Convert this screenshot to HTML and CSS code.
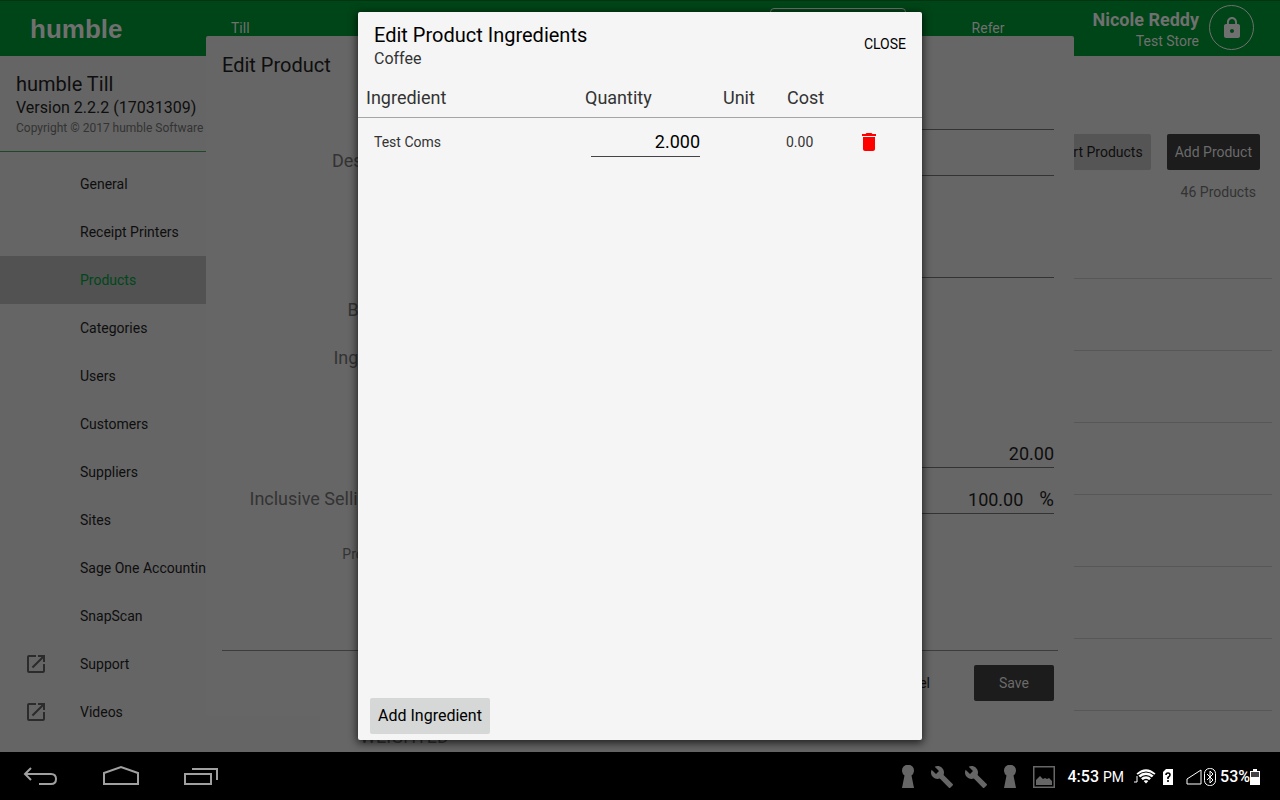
FILE: index.html
```html
<!DOCTYPE html>
<html lang="en">
<head>
<meta charset="utf-8">
<meta name="viewport" content="width=device-width, initial-scale=1">
<title>humble Till</title>
<link rel="stylesheet" href="styles.css">
</head>
<body>
<div class="app">
  <header class="topbar">
    <div class="brand">humble</div>
    <nav class="tabs">
      <a href="#till">Till</a>
      <a class="tab-active" href="#office" aria-label="Back office"></a>
      <a href="#refer">Refer</a>
    </nav>
    <div class="account">
      <strong>Nicole Reddy</strong>
      <span>Test Store</span>
    </div>
    <button class="lock" type="button" aria-label="Lock">
      <svg width="24" height="24" viewBox="0 0 24 24" fill="currentColor"><path d="M18 8h-1V6c0-2.800-2.200-5-5-5S7 3.200 7 6v2H6c-1.100 0-2 .9-2 2v10c0 1.100.9 2 2 2h12c1.100 0 2-.9 2-2V10c0-1.100-.9-2-2-2zm-6 9c-1.100 0-2-.9-2-2s.9-2 2-2 2 .9 2 2-.9 2-2 2zm3.100-9H8.900V6c0-1.700 1.400-3.100 3.100-3.100s3.100 1.400 3.100 3.100v2z"/></svg>
    </button>
  </header>
  <div class="workspace">
    <aside class="sidebar">
      <div class="about">
        <h1>humble Till</h1>
        <p class="version">Version 2.2.2 (17031309)</p>
        <p class="copyright">Copyright © 2017 humble Software</p>
      </div>
      <nav class="menu">
        <a href="#general">General</a>
        <a href="#printers">Receipt Printers</a>
        <a class="selected" href="#products">Products</a>
        <a href="#categories">Categories</a>
        <a href="#users">Users</a>
        <a href="#customers">Customers</a>
        <a href="#suppliers">Suppliers</a>
        <a href="#sites">Sites</a>
        <a href="#sage">Sage One Accounting</a>
        <a href="#snapscan">SnapScan</a>
        <a href="#support"><svg width="24" height="24" viewBox="0 0 24 24" fill="currentColor"><path d="M19 19H5V5h7V3H5c-1.110 0-2 .9-2 2v14c0 1.100.89 2 2 2h14c1.100 0 2-.9 2-2v-7h-2v7zM14 3v2h3.590l-9.830 9.830 1.410 1.410L19 6.410V10h2V3h-7z"/></svg>Support</a>
        <a href="#videos"><svg width="24" height="24" viewBox="0 0 24 24" fill="currentColor"><path d="M19 19H5V5h7V3H5c-1.110 0-2 .9-2 2v14c0 1.100.89 2 2 2h14c1.100 0 2-.9 2-2v-7h-2v7zM14 3v2h3.590l-9.830 9.830 1.410 1.410L19 6.410V10h2V3h-7z"/></svg>Videos</a>
      </nav>
    </aside>
    <main class="products">
      <div class="actions">
        <button class="btn" type="button">Import Products</button>
        <button class="btn dark" type="button">Add Product</button>
      </div>
      <p class="count">46 Products</p>
      <ul class="list">
        <li></li><li></li><li></li><li></li><li></li><li></li><li></li>
        <li class="last">WEIGHTED</li>
      </ul>
    </main>
  </div>

  <div class="layer">
    <section class="product-dialog" aria-label="Edit Product">
      <h2>Edit Product</h2>
      <form class="form">
        <div class="field name"><input id="name" aria-label="Name"></div>
        <div class="field"><label for="desc">Description</label><input id="desc"></div>
        <div class="field category"><input id="cat" aria-label="Category"></div>
        <div class="field plain barcode"><label for="bar">Barcodes</label><input id="bar"></div>
        <div class="field plain ingr"><label for="ingr">Ingredients</label><input id="ingr"></div>
        <div class="field cost"><input id="cost" aria-label="Cost Price" value="20.00"></div>
        <div class="field"><label for="sell">Inclusive Selling Price</label><span class="percent"><input id="sell" value="100.00"><span>%</span></span></div>
        <div class="field plain profit"><label for="profit">Profit Margin</label><input id="profit"></div>
      </form>
      <footer class="form-foot">
        <button class="btn flat" type="button">Cancel</button>
        <button class="btn dark save" type="button">Save</button>
      </footer>
    </section>
  </div>

  <div class="layer">
    <section class="ingredients" role="dialog" aria-labelledby="title">
      <header class="dialog-head">
        <div class="heading">
          <h2 id="title">Edit Product Ingredients</h2>
          <p>Coffee</p>
        </div>
        <button class="close" type="button">CLOSE</button>
      </header>
      <table>
        <colgroup><col class="c-name"><col class="c-qty"><col class="c-unit"><col class="c-cost"><col></colgroup>
        <thead><tr><th>Ingredient</th><th>Quantity</th><th>Unit</th><th>Cost</th><th></th></tr></thead>
        <tbody><tr>
          <td class="item">Test Coms</td>
          <td><input class="qty" aria-label="Quantity" value="2.000"></td>
          <td></td>
          <td>0.00</td>
          <td class="remove"><button class="trash" type="button" aria-label="Delete"><svg width="24" height="24" viewBox="0 0 24 24" fill="currentColor"><path d="M6 19c0 1.100.9 2 2 2h8c1.100 0 2-.9 2-2V7H6v12zM19 4h-3.500l-1-1h-5l-1 1H5v2h14V4z"/></svg></button></td>
        </tr></tbody>
      </table>
      <button class="add" type="button">Add Ingredient</button>
    </section>
  </div>
</div>

<footer class="system">
  <div class="keys">
    <button type="button" aria-label="Back"><svg width="36" height="24" viewBox="0 0 36 24" fill="none" stroke="currentColor" stroke-width="2"><path d="M8 3L2 9l6 6M2 9h26q5 0 5 5t-5 5H16"/></svg></button>
    <button type="button" aria-label="Home"><svg width="38" height="24" viewBox="0 0 38 24" fill="none" stroke="currentColor" stroke-width="2"><path d="M2 19V8l17-6 17 6v11z"/></svg></button>
    <button type="button" aria-label="Recent apps"><svg width="36" height="24" viewBox="0 0 36 24" fill="none" stroke="currentColor" stroke-width="2"><path d="M2 9h26v10H2zM9 4h25v11"/></svg></button>
  </div>
  <div class="notices">
    <svg width="24" height="24" viewBox="-5 0 24 24" fill="currentColor"><path d="M3.500 10.500a6 6 0 1 1 7 0L13 23H1z"/></svg>
    <svg width="24" height="24" viewBox="0 0 24 24" fill="currentColor"><path d="M22.700 19l-9.100-9.100c.9-2.300.4-5-1.500-6.900-2-2-5-2.400-7.400-1.300L9 6 6 9 1.600 4.700C.4 7.100.9 10.100 2.900 12.100c1.900 1.900 4.600 2.400 6.900 1.500l9.100 9.100c.4.4 1 .4 1.400 0l2.300-2.300c.5-.4.500-1.100.1-1.400z"/></svg>
    <svg width="24" height="24" viewBox="0 0 24 24" fill="currentColor"><path d="M22.700 19l-9.100-9.100c.9-2.300.4-5-1.500-6.900-2-2-5-2.400-7.400-1.300L9 6 6 9 1.600 4.700C.4 7.100.9 10.100 2.900 12.100c1.900 1.900 4.600 2.400 6.900 1.500l9.100 9.100c.4.4 1 .4 1.400 0l2.300-2.300c.5-.4.500-1.100.1-1.400z"/></svg>
    <svg width="24" height="24" viewBox="-5 0 24 24" fill="currentColor"><path d="M3.500 10.500a6 6 0 1 1 7 0L13 23H1z"/></svg>
    <svg width="24" height="24" viewBox="0 0 24 24" fill="currentColor"><path fill-rule="evenodd" d="M1 1h22v22H1zm1.500 1.500v19h19v-19z"/><path d="M4 20v-5l4-4 3 3 2-1 2 1 2-1 3 3v4z"/></svg>
  </div>
  <div class="status">
    <span class="clock">4:53 <small>PM</small></span>
    <svg class="wifi" width="22" height="18" viewBox="0 0 22 18"><path d="M12 15.500L2.500 5.500Q12-3 21.500 5.500z" fill="#fff"/><path d="M3.500 7.500q8.500-7 17 0M6 10.200q6-5 12 0M8.700 13q3.300-3 6.600 0" fill="none" stroke="#000" stroke-width="1.200"/><path d="M0 14h3V8" fill="none" stroke="#fff" stroke-width="1"/></svg>
    <svg class="sim" width="10" height="16" viewBox="0 0 10 16"><path d="M3 0h7v16H0V3z" fill="#fff"/><path d="M3 6q0-2 2-2t2 2q0 1.200-2 2.500v1.500M5 11v2" fill="none" stroke="#000" stroke-width="1.600"/></svg>
    <svg class="signal" width="16" height="16" viewBox="0 0 16 16"><path d="M1 10L15 1v14H1z" fill="none" stroke="#fff"/></svg>
    <svg class="bt" width="12" height="18" viewBox="0 0 12 18" fill="none" stroke="#fff"><rect x=".5" y=".5" width="11" height="17" rx="5"/><path d="M3 6l6 6-3 3V3l3 3-6 6"/></svg>
    <span class="level">53%</span>
    <svg width="10" height="16" viewBox="0 0 10 16"><path d="M3 0h4v2h3v14H0V2h3z" fill="#fff"/><path d="M1 3h8v5H1z" fill="#444"/></svg>
  </div>
</footer>
</body>
</html>
```

FILE: styles.css
```css
* { box-sizing: border-box; }
body { margin: 0; height: 100vh; display: flex; flex-direction: column; overflow: hidden; background: #000; color: #0e0e0e; font: 14px/20px Roboto, "Liberation Sans", sans-serif; }
h1, h2, p, ul { margin: 0; padding: 0; font-weight: 400; }
a { color: inherit; text-decoration: none; }
button { font: inherit; color: inherit; border: 0; padding: 0; background: none; }
input { font: inherit; color: inherit; border: 0; padding: 0; background: none; min-width: 0; border-radius: 0; text-align: right; outline: 0; }
svg { display: block; flex: none; }

.app { position: relative; flex: 1; min-height: 0; display: flex; flex-direction: column; overflow: hidden; background: #666; }
.topbar { height: 56px; flex: none; display: flex; align-items: center; padding: 0 26px 2px 30px; background: #004517; border-top: 1px solid #003310; color: #707070; }
.brand { width: 201px; padding-top: 2px; font: 700 26px/32px "Liberation Sans", sans-serif; }
.tabs { flex: 1; display: flex; align-items: center; }
.tab-active { width: 136px; height: 40px; margin-left: 520px; margin-right: 66px; border: 1px solid #707070; border-radius: 4px; }
.account { display: flex; flex-direction: column; align-items: flex-end; margin-right: 10px; padding-top: 4px; white-space: nowrap; }
.account strong { font-size: 18px; line-height: 22px; }
.lock { width: 45px; height: 45px; display: grid; place-items: center; border: 1px solid #707070; border-radius: 50%; }

.workspace { flex: 1; min-height: 0; display: flex; }
.sidebar { width: 320px; flex: none; background: #656565; }
.about { height: 96px; padding: 16px 16px 0; border-bottom: 1px solid #1d4a26; }
.about h1 { font-size: 20px; line-height: 24px; }
.version { font-size: 16px; line-height: 24px; }
.copyright { font-size: 12px; line-height: 16px; color: #333; }
.menu { padding-top: 8px; }
.menu a { height: 48px; display: flex; align-items: center; padding-left: 80px; }
.menu .selected { background: #525252; color: #00471a; }
.menu svg { margin: 0 32px 0 -56px; color: #2b2b2b; }

.products { flex: 1; min-width: 0; padding: 78px 8px 0 40px; }
.actions { display: flex; justify-content: flex-end; gap: 16px; padding-right: 12px; }
.btn { height: 36px; padding: 0 8px; border-radius: 2px; background: #555; }
.dark { background: #1c1c1c; color: #6b6b6b; }
.count { padding: 12px 16px 0 0; text-align: right; color: #333; }
.list { list-style: none; padding-top: 5px; }
.list li { height: 72px; border-bottom: 1px solid #575757; }
.list .last { border: 0; font-size: 18px; padding-top: 16px; color: #333; }

.layer { position: absolute; inset: 0; display: flex; align-items: center; justify-content: center; }
.product-dialog { width: 868px; max-width: 100%; height: calc(100% - 72px); display: flex; flex-direction: column; padding: 16px 16px 15px; background: #666; border-radius: 2px; }
.product-dialog h2 { font-size: 20px; line-height: 26px; }
.form { flex: 1; padding-right: 4px; font-size: 18px; }
.field { display: grid; grid-template-columns: 201px 1fr; gap: 16px; align-items: center; height: 46px; }
.field label { padding-top: 6px; text-align: right; color: #333; }
.field input { grid-column: 2; height: 36px; width: 100%; padding-top: 8px; border-bottom: 1px solid #333; }
.field.plain input, .percent input { border: 0; }
.name { margin-top: 11px; }
.category { margin-top: 56px; }
.barcode { margin-top: 1px; }
.ingr { margin-top: 2px; }
.cost { margin-top: 49px; }
.profit { margin-top: 9px; font-size: 14px; }
.percent { display: flex; align-items: center; gap: 16px; height: 36px; border-bottom: 1px solid #333; }
.percent span { padding-top: 6px; font-size: 20px; color: #0e0e0e; }
.form-foot { display: flex; justify-content: flex-end; gap: 36px; padding: 14px 4px 0 0; border-top: 1px solid #3c3c3c; }
.flat { background: none; }
.save { width: 80px; }

.ingredients { width: 564px; max-width: 100%; height: calc(100% - 24px); display: flex; flex-direction: column; background: #f5f5f5; color: #000; border-radius: 2px; box-shadow: 0 2px 8px 1px rgba(0, 0, 0, .7); }
.dialog-head { display: flex; align-items: center; justify-content: space-between; height: 64px; padding: 0 16px; }
.heading { padding-top: 5px; }
.dialog-head h2 { font-size: 20px; line-height: 24px; }
.dialog-head p { font-size: 16px; line-height: 24px; color: #333; }
table { width: 100%; table-layout: fixed; border-collapse: collapse; color: #333; }
.c-name { width: 219px; }
.c-qty { width: 138px; }
.c-unit { width: 64px; }
.c-cost { width: 74px; }
th { height: 41px; padding: 3px 0 0 8px; border-bottom: 1px solid #a5a5a5; text-align: left; font-size: 18px; font-weight: 400; }
td { height: 49px; padding: 0 0 0 7px; }
.item { padding-left: 16px; }
.remove { padding-left: 4px; }
.qty { display: block; width: 109px; height: 30px; margin-left: 7px; border-bottom: 1px solid #444; font-size: 18px; color: #000; }
.trash { display: block; color: #f00; }
.add { width: 120px; height: 36px; margin: auto 0 6px 12px; border-radius: 2px; background: #d6d7d7; font-size: 16px; }

.system { height: 48px; flex: none; display: flex; align-items: center; padding: 2px 20px 0 23px; background: #000; color: #fff; }
.keys { flex: 1; display: flex; gap: 43px; color: #a0a0a0; }
.notices { display: flex; gap: 10px; color: #666; }
.status { display: flex; align-items: center; margin-left: 11px; white-space: nowrap; }
.clock, .level { font-size: 16px; font-weight: 500; }
.clock small { font-size: 14px; font-weight: 400; }
.wifi { margin-left: 10px; }
.sim { margin: 0 13px 0 7px; }
.bt { margin: 0 4px 0 2px; }
```
